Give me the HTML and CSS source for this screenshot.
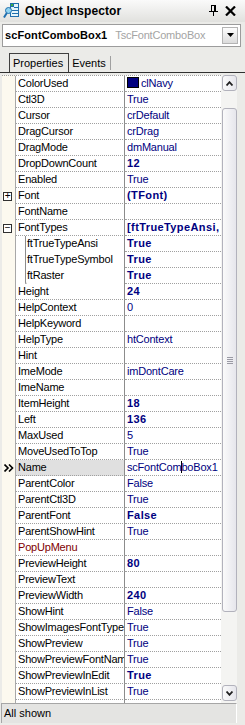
FILE: index.html
```html
<!DOCTYPE html>
<html lang="en">
<head>
    <meta charset="UTF-8">
    <title>Object Inspector</title>
    <link rel="stylesheet" href="styles.css">
</head>
<body>
    <div class="inspector">
        <div class="titlebar">
            <svg class="title-icon" width="17" height="17" viewBox="0 0 17 17">
                <rect x="7.5" y="1.5" width="8" height="13" fill="#e4f5fb" stroke="#1f6fae"/>
                <rect x="7.5" y="1.5" width="3" height="3" fill="#3cb043" stroke="#1f6fae"/>
                <line x1="11" y1="5.5" x2="15" y2="5.5" stroke="#1f6fae"/>
                <line x1="9" y1="8.5" x2="15" y2="8.5" stroke="#1f6fae"/>
                <line x1="9" y1="11.5" x2="15" y2="11.5" stroke="#1f6fae"/>
                <circle cx="5.5" cy="8.5" r="3" fill="#8fd3f0" stroke="#1f6fae"/>
                <line x1="3.8" y1="11" x2="1" y2="15.5" stroke="#1f6fae" stroke-width="2"/>
            </svg>
            <span class="title">Object Inspector</span>
            <svg class="pin" width="10" height="11" viewBox="0 0 10 11">
                <rect x="2.5" y="0.5" width="4" height="6" fill="none" stroke="#000"/>
                <line x1="5.5" y1="0" x2="5.5" y2="7" stroke="#000"/>
                <line x1="0" y1="6.5" x2="9" y2="6.5" stroke="#000"/>
                <line x1="4.5" y1="7" x2="4.5" y2="11" stroke="#000"/>
            </svg>
            <svg class="close" width="11" height="10" viewBox="0 0 11 10">
                <path d="M1 0.5 L10 9.5 M10 0.5 L1 9.5" stroke="#000" stroke-width="2.2"/>
            </svg>
        </div>

        <div class="combo">
            <span class="obj-name">scFontComboBox1</span>
            <span class="obj-type">TscFontComboBox</span>
            <span class="combo-btn">
                <svg width="7" height="4" viewBox="0 0 7 4"><path d="M0 0 H7 L3.5 4 Z" fill="#000"/></svg>
            </span>
        </div>

        <div class="tabs">
            <span class="tab active">Properties</span>
            <span class="tab">Events</span>
        </div>

        <div class="grid-wrap">
            <div class="grid">
                <div class="row"><span class="gut"></span><span class="nm">ColorUsed</span><span class="val"><i class="swatch"></i>clNavy</span></div>
                <div class="row"><span class="gut"></span><span class="nm">Ctl3D</span><span class="val">True</span></div>
                <div class="row"><span class="gut"></span><span class="nm">Cursor</span><span class="val">crDefault</span></div>
                <div class="row"><span class="gut"></span><span class="nm">DragCursor</span><span class="val">crDrag</span></div>
                <div class="row"><span class="gut"></span><span class="nm">DragMode</span><span class="val">dmManual</span></div>
                <div class="row"><span class="gut"></span><span class="nm">DropDownCount</span><span class="val b">12</span></div>
                <div class="row"><span class="gut"></span><span class="nm">Enabled</span><span class="val">True</span></div>
                <div class="row"><span class="gut"><i class="expander">+</i></span><span class="nm">Font</span><span class="val b">(TFont)</span></div>
                <div class="row"><span class="gut"></span><span class="nm">FontName</span><span class="val"></span></div>
                <div class="row"><span class="gut"><i class="expander">&minus;</i></span><span class="nm">FontTypes</span><span class="val b">[ftTrueTypeAnsi,</span></div>
                <div class="row"><span class="gut"></span><span class="nm sub"><span class="sub-in">ftTrueTypeAnsi</span></span><span class="val b">True</span></div>
                <div class="row"><span class="gut"></span><span class="nm sub"><span class="sub-in">ftTrueTypeSymbol</span></span><span class="val b">True</span></div>
                <div class="row"><span class="gut"></span><span class="nm sub"><span class="sub-in last">ftRaster</span></span><span class="val b">True</span></div>
                <div class="row"><span class="gut"></span><span class="nm">Height</span><span class="val b">24</span></div>
                <div class="row"><span class="gut"></span><span class="nm">HelpContext</span><span class="val">0</span></div>
                <div class="row"><span class="gut"></span><span class="nm">HelpKeyword</span><span class="val"></span></div>
                <div class="row"><span class="gut"></span><span class="nm">HelpType</span><span class="val">htContext</span></div>
                <div class="row"><span class="gut"></span><span class="nm">Hint</span><span class="val"></span></div>
                <div class="row"><span class="gut"></span><span class="nm">ImeMode</span><span class="val">imDontCare</span></div>
                <div class="row"><span class="gut"></span><span class="nm">ImeName</span><span class="val"></span></div>
                <div class="row"><span class="gut"></span><span class="nm">ItemHeight</span><span class="val b">18</span></div>
                <div class="row"><span class="gut"></span><span class="nm">Left</span><span class="val b">136</span></div>
                <div class="row"><span class="gut"></span><span class="nm">MaxUsed</span><span class="val">5</span></div>
                <div class="row"><span class="gut"></span><span class="nm">MoveUsedToTop</span><span class="val">True</span></div>
                <div class="row selected">
                    <span class="gut">
                        <svg width="10" height="8" viewBox="0 0 10 8"><path d="M0.5 0.5 L4 4 L0.5 7.5 M5 0.5 L8.5 4 L5 7.5" fill="none" stroke="#000" stroke-width="1.6"/></svg>
                    </span>
                    <span class="nm">Name</span><span class="val">scFontCom<i class="caret"></i>boBox1</span>
                </div>
                <div class="row"><span class="gut"></span><span class="nm">ParentColor</span><span class="val">False</span></div>
                <div class="row"><span class="gut"></span><span class="nm">ParentCtl3D</span><span class="val">True</span></div>
                <div class="row"><span class="gut"></span><span class="nm">ParentFont</span><span class="val b">False</span></div>
                <div class="row"><span class="gut"></span><span class="nm">ParentShowHint</span><span class="val">True</span></div>
                <div class="row"><span class="gut"></span><span class="nm ref">PopUpMenu</span><span class="val"></span></div>
                <div class="row"><span class="gut"></span><span class="nm">PreviewHeight</span><span class="val b">80</span></div>
                <div class="row"><span class="gut"></span><span class="nm">PreviewText</span><span class="val"></span></div>
                <div class="row"><span class="gut"></span><span class="nm">PreviewWidth</span><span class="val b">240</span></div>
                <div class="row"><span class="gut"></span><span class="nm">ShowHint</span><span class="val">False</span></div>
                <div class="row"><span class="gut"></span><span class="nm">ShowImagesFontType</span><span class="val">True</span></div>
                <div class="row"><span class="gut"></span><span class="nm">ShowPreview</span><span class="val">True</span></div>
                <div class="row"><span class="gut"></span><span class="nm">ShowPreviewFontNam</span><span class="val">True</span></div>
                <div class="row"><span class="gut"></span><span class="nm">ShowPreviewInEdit</span><span class="val b">True</span></div>
                <div class="row"><span class="gut"></span><span class="nm">ShowPreviewInList</span><span class="val">True</span></div>
                <div class="row"><span class="gut"></span><span class="nm"></span><span class="val"></span></div>
            </div>
            <div class="scroll">
                <span class="sb-btn">
                    <svg width="7" height="5" viewBox="0 0 7 5"><path d="M0.5 4.5 L3.5 1.2 L6.5 4.5" fill="none" stroke="#202020" stroke-width="1.8"/></svg>
                </span>
                <span class="thumb"><i class="grip"></i></span>
                <span class="sb-btn down">
                    <svg width="7" height="5" viewBox="0 0 7 5"><path d="M0.5 0.5 L3.5 3.8 L6.5 0.5" fill="none" stroke="#202020" stroke-width="1.8"/></svg>
                </span>
            </div>
        </div>

        <div class="status">All shown</div>
    </div>
</body>
</html>
```

FILE: styles.css
```css
body {
    margin: 0;
    font-family: "Liberation Sans", Arial, sans-serif;
    font-size: 11px;
    background-color: #ebebe8;
}

.inspector {
    width: 245px;
    height: 725px;
    display: flex;
    flex-direction: column;
    background-color: #ebebe8;
}

/* title bar */
.titlebar {
    height: 23px;
    display: flex;
    align-items: center;
    padding: 0 9px 0 3px;
    background: linear-gradient(#fafafa, #e1e1de);
}

.title {
    flex: 1;
    margin-left: 5px;
    font-size: 12px;
    font-weight: bold;
    letter-spacing: 0.1px;
}

.close {
    margin-left: 6px;
}

/* component selector */
.combo {
    margin: 2px 4px 0 2px;
    height: 22px;
    display: flex;
    align-items: center;
    background-color: #ffffff;
    border: 1px solid #9c9c9c;
}

.obj-name {
    padding-left: 2px;
    font-weight: bold;
    letter-spacing: 0.1px;
}

.obj-type {
    flex: 1;
    margin-left: 8px;
    color: #a4a4a4;
    letter-spacing: -0.2px;
}

.combo-btn {
    width: 14px;
    height: 15px;
    margin-right: 2px;
    display: flex;
    align-items: center;
    justify-content: center;
    border: 1px solid #b4b4b4;
    background: linear-gradient(#fdfdfd, #dcdcdc);
}

/* tabs */
.tabs {
    margin-top: 6px;
    height: 19px;
    display: flex;
    align-items: flex-end;
    padding-left: 9px;
    border-bottom: 1px solid #303030;
}

.tab {
    height: 18px;
    line-height: 18px;
    padding: 0 4px 0 3px;
}

.tab.active {
    padding-right: 5px;
    border: 1px solid #404040;
    border-bottom: none;
}

.tab + .tab {
    border-right: 1px solid #a0a0a0;
    height: 14px;
    line-height: 14px;
    margin-bottom: 2px;
}

/* property grid */
.grid-wrap {
    margin-top: 2px;
    height: 628px;
    display: flex;
    padding-left: 2px;
}

.grid {
    width: 219px;
    overflow: hidden;
    background: linear-gradient(90deg, #fcf9ef 14px, #ffffff 14px);
    border-top: 1px dotted #a0a0a0;
}

.row {
    display: grid;
    grid-template-columns: 14px 109px 96px;
    height: 16px;
    line-height: 15px;
    white-space: nowrap;
    letter-spacing: -0.2px;
}

.gut {
    display: flex;
    align-items: center;
    padding-left: 1px;
    background-color: #fcf9ef;
    border-right: 1px solid #a8a8a8;
}

.nm,
.val {
    overflow: hidden;
    border-bottom: 1px dotted #a0a0a0;
}

.nm {
    padding-left: 2px;
    color: #000000;
    border-right: 1px solid #8c8c8c;
}

.nm.ref {
    color: #800000;
}

.nm.sub {
    padding-left: 9px;
    border-bottom: none;
}

.sub-in {
    display: block;
    height: 16px;
    padding-left: 1px;
    border-left: 1px solid #8c8c8c;
    border-bottom: 1px dotted #a0a0a0;
}

.sub-in.last {
    border-bottom-left-radius: 3px;
}

.val {
    padding-left: 2px;
    color: #000080;
}

.val.b {
    font-weight: bold;
    letter-spacing: 0.4px;
}

.swatch {
    display: inline-block;
    width: 10px;
    height: 9px;
    margin: 0 2px -1px 0;
    background-color: #000080;
    border: 1px solid #000000;
}

.expander {
    width: 7px;
    height: 7px;
    border: 1px solid #303030;
    background-color: #ffffff;
    font-style: normal;
    font-size: 10px;
    line-height: 6px;
    text-align: center;
}

.selected .nm {
    background-color: #e0e0e0;
}

.selected .gut svg {
    margin-left: 1px;
}

.caret {
    display: inline-block;
    width: 1px;
    height: 12px;
    margin-right: -1px;
    vertical-align: -2px;
    background-color: #000000;
}

/* scrollbar */
.scroll {
    width: 16px;
    display: flex;
    flex-direction: column;
    padding-bottom: 2px;
    background-color: #f4f4f2;
}

.sb-btn,
.thumb {
    width: 13px;
    margin-left: 1px;
    border: 1px solid #b2b2bc;
    border-radius: 3px;
    background: linear-gradient(90deg, #fafafa, #e6e6ec);
}

.sb-btn {
    height: 14px;
    display: flex;
    align-items: center;
    justify-content: center;
}

.sb-btn.down {
    margin-top: auto;
}

.thumb {
    height: 502px;
    margin-top: 17px;
    display: flex;
    align-items: center;
    justify-content: center;
}

.grip {
    width: 6px;
    height: 7px;
    background: repeating-linear-gradient(#9a9aa4 0 1px, transparent 1px 2px);
}

/* status bar */
.status {
    margin: 0 8px 2px 1px;
    height: 20px;
    line-height: 19px;
    padding-left: 2px;
    background-color: #e4e4e2;
    border-top: 1px solid #a6a6a6;
    border-left: 1px solid #a6a6a6;
    border-right: 1px solid #ffffff;
    box-sizing: border-box;
}
```
